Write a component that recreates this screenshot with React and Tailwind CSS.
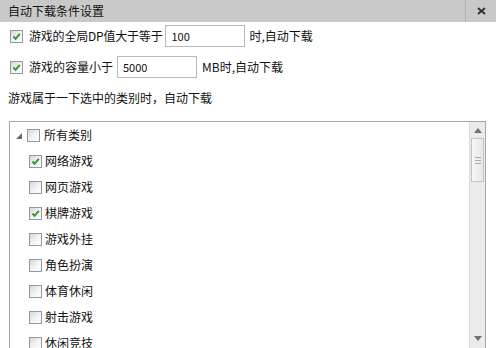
import React from "react";

const FONT = { fontFamily: '"Noto Sans CJK SC", "Noto Sans", sans-serif' };

const CheckBox = ({ checked }) => (
  <span className="relative inline-block w-[13px] h-[13px] shrink-0 border border-[#8f9aa6] bg-gradient-to-br from-[#d6d6d6] via-[#f2f2f2] to-white">
    {checked && (
      <svg className="absolute left-[1px] top-[1px]" width="9" height="9" viewBox="0 0 9 9">
        <path d="M1.5 4.5 L3.6 6.8 L7.8 1.8" fill="none" stroke="#2f9a2f" strokeWidth="2" />
      </svg>
    )}
  </span>
);

const categories = [
  { name: "网络游戏", checked: true },
  { name: "网页游戏", checked: false },
  { name: "棋牌游戏", checked: true },
  { name: "游戏外挂", checked: false },
  { name: "角色扮演", checked: false },
  { name: "体育休闲", checked: false },
  { name: "射击游戏", checked: false },
  { name: "休闲竞技", checked: false },
];

const App = () => {
  return (
    <div
      className="w-[496px] h-[348px] overflow-hidden bg-white text-[12px] leading-[14px] text-[#111] whitespace-nowrap"
      style={FONT}
    >
      {/* title bar */}
      <div className="flex h-[22px] bg-[#c9c9c9]">
        <div className="flex-1 flex items-center pl-[8px] text-[#111]">
          自动下载条件设置
        </div>
        <div className="w-[31px] flex items-center justify-center border-l border-[#b3b3b3]">
          <svg width="9" height="8" viewBox="0 0 9 8">
            <path d="M1 1 L8 7 M8 1 L1 7" stroke="#333" strokeWidth="2" />
          </svg>
        </div>
      </div>

      {/* options */}
      <div className="flex items-center h-[22px] mt-[3px] pl-[10px]">
        <CheckBox checked />
        <span className="ml-[6px] tracking-[-0.2px]">游戏的全局DP值大于等于</span>
        <div className="ml-[3px] w-[80px] h-[22px] flex items-center border border-[#b5b9c0] pl-[5px] text-[11px]">
          100
        </div>
        <span className="ml-[4px]">时,自动下载</span>
      </div>

      <div className="flex items-center h-[22px] mt-[9px] pl-[10px]">
        <CheckBox checked />
        <span className="ml-[6px]">游戏的容量小于</span>
        <div className="ml-[4px] w-[80px] h-[22px] flex items-center border border-[#b5b9c0] pl-[5px] text-[11px]">
          5000
        </div>
        <span className="ml-[5px]">MB时,自动下载</span>
      </div>

      <div className="h-[14px] mt-[13px] pl-[8px]">游戏属于一下选中的类别时，自动下载</div>

      {/* category tree */}
      <div className="flex ml-[9px] mr-[10px] mt-[16px] h-[240px] border border-[#a7a7a7]">
        <div className="flex-1 flex flex-col">
          <div className="flex shrink-0 items-center h-[26px] pl-[6px]">
            <svg width="6" height="6" viewBox="0 0 6 6" className="mt-[1px]">
              <path d="M6 0 L6 6 L0 6 Z" fill="#6b6b6b" />
            </svg>
            <span className="ml-[5px] flex">
              <CheckBox />
            </span>
            <span className="ml-[4px]">所有类别</span>
          </div>
          {categories.map((c) => (
            <div key={c.name} className="flex shrink-0 items-center h-[26px] pl-[19px]">
              <CheckBox checked={c.checked} />
              <span className="ml-[3px]">{c.name}</span>
            </div>
          ))}
        </div>

        {/* scrollbar */}
        <div className="w-[16px] flex flex-col bg-[#ebebeb] border-l border-[#dcdcdc]">
          <div className="h-[16px] flex items-center justify-center">
            <svg width="8" height="5" viewBox="0 0 8 5">
              <path d="M4 0 L8 5 L0 5 Z" fill="#6e6e6e" />
            </svg>
          </div>
          <div className="h-[44px] mx-[1px] flex flex-col items-center justify-center gap-[2px] border border-[#c4c4c4] bg-gradient-to-r from-[#f7f7f7] to-[#e6e6e6]">
            <span className="w-[6px] h-px bg-[#a8a8a8]" />
            <span className="w-[6px] h-px bg-[#a8a8a8]" />
            <span className="w-[6px] h-px bg-[#a8a8a8]" />
          </div>
          <div className="flex-1" />
          <div className="h-[16px] mb-[14px] flex items-center justify-center">
            <svg width="8" height="5" viewBox="0 0 8 5">
              <path d="M0 0 L8 0 L4 5 Z" fill="#6e6e6e" />
            </svg>
          </div>
        </div>
      </div>
    </div>
  );
};

export default App;
